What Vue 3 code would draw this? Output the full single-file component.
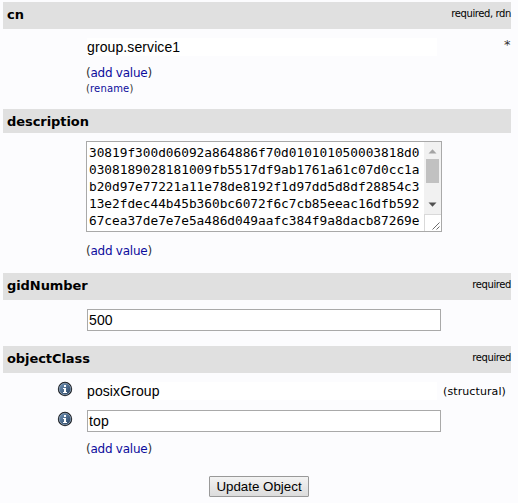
<script setup>
const description = [
  '30819f300d06092a864886f70d010101050003818d0',
  '0308189028181009fb5517df9ab1761a61c07d0cc1a',
  'b20d97e77221a11e78de8192f1d97dd5d8df28854c3',
  '13e2fdec44b45b360bc6072f6c7cb85eeac16dfb592',
  '67cea37de7e7e5a486d049aafc384f9a8dacb87269e',
]
const classes = [
  { name: 'posixGroup', structural: true },
  { name: 'top', structural: false },
]
</script>

<template>
  <main class="form">
    <section class="cn">
      <header class="bar"><b>cn</b><small>required, rdn</small></header>
      <div class="row">
        <div class="field plain"><span>group.service1</span></div>
        <span class="star">*</span>
      </div>
      <div class="add">(<a>add value</a>)</div>
      <div class="rename">(<a>rename</a>)</div>
    </section>

    <section class="desc">
      <header class="bar short"><b>description</b></header>
      <div class="textarea">
        <div class="lines">
          <div v-for="line in description" :key="line">{{ line }}</div>
        </div>
        <div class="side">
          <div class="scroll">
            <svg class="up" width="9" height="5" viewBox="0 0 9 5"><path d="M0.5 4.5 4.5 0.3 8.5 4.5Z" fill="#a3a3a3" /></svg>
            <div class="thumb"></div>
            <svg class="down" width="9" height="5" viewBox="0 0 9 5"><path d="M0.5 0.5 4.5 4.7 8.5 0.5Z" fill="#505050" /></svg>
          </div>
          <div class="corner">
            <svg width="8" height="8" viewBox="0 0 8 8"><path d="M0.5 7.5 7.5 0.5M4.5 7.5 7.5 4.5" stroke="#5a5a5a" stroke-width="0.9" /></svg>
          </div>
        </div>
      </div>
      <div class="add">(<a>add value</a>)</div>
    </section>

    <section class="gid">
      <header class="bar"><b>gidNumber</b><small>required</small></header>
      <div class="row"><div class="field boxed"><span>500</span></div></div>
    </section>

    <section class="oc">
      <header class="bar"><b>objectClass</b><small>required</small></header>
      <div v-for="c in classes" :key="c.name" class="row">
        <svg class="info" width="16" height="16" viewBox="0 0 16 16">
          <defs>
            <linearGradient id="disc" x1="0" y1="0" x2="1" y2="1">
              <stop offset="0" stop-color="#6f93b8" />
              <stop offset="1" stop-color="#27405f" />
            </linearGradient>
          </defs>
          <circle cx="8" cy="8" r="7.2" fill="#1b1f25" />
          <circle cx="8" cy="8" r="5.8" fill="url(#disc)" stroke="#9fb2c6" stroke-width="0.7" />
          <path d="M7 4h2v2H7zM6 7h3v4h1v1H6v-1h1V8H6z" fill="#fff" />
        </svg>
        <div class="field" :class="c.structural ? 'plain' : 'boxed'"><span>{{ c.name }}</span></div>
        <span v-if="c.structural" class="struct">(structural)</span>
      </div>
      <div class="add">(<a>add value</a>)</div>
    </section>

    <button class="submit" type="button">Update Object</button>
  </main>
</template>

<style>
body {
  background: #fcfcfe;
}
</style>

<style scoped>
.form {
  box-sizing: border-box;
  width: 518px;
  height: 503px;
  padding: 2px 7px 0 3px;
  overflow: hidden;
  font-family: "DejaVu Sans", sans-serif;
  font-size: 12px;
  color: #000;
}
.cn { height: 107px; }
.desc { height: 164px; }
.gid { height: 73px; }
.oc { height: 130px; }
.bar {
  box-sizing: border-box;
  width: 508px;
  height: 27px;
  padding: 0 0 0 4px;
  display: flex;
  justify-content: space-between;
  background: #e0e0e0;
}
.bar.short { height: 24px; }
.bar b {
  font-size: 13px;
  line-height: 25px;
  letter-spacing: -0.07px;
}
.bar small {
  font-size: 10px;
  line-height: 23px;
  letter-spacing: -0.4px;
}
.row {
  display: flex;
  padding-left: 84px;
}
.field {
  box-sizing: border-box;
  background: #fff;
  font-family: "Liberation Sans", Arial, sans-serif;
  font-size: 14px;
  letter-spacing: 0.1px;
}
.plain {
  width: 350px;
  height: 18px;
  line-height: 18px;
}
.boxed {
  width: 354px;
  height: 22px;
  border: 1px solid #a9a9a9;
  padding-left: 1px;
  line-height: 20px;
}
.cn .row { margin-top: 9px; }
.star {
  margin-left: 67px;
  font-size: 13px;
  line-height: 14px;
  color: #333;
}
.add {
  padding-left: 83px;
  line-height: 16px;
  letter-spacing: -0.25px;
  color: #333;
}
a {
  color: #0c0c9c;
}
.cn .add { margin-top: 9px; }
.rename {
  padding-left: 83px;
  font-size: 10px;
  line-height: 16px;
  letter-spacing: 0.15px;
  color: #333;
}
.textarea {
  box-sizing: border-box;
  width: 356px;
  height: 91px;
  margin: 8px 0 11px 83px;
  border: 1px solid #a9a9a9;
  background: #fff;
  display: flex;
  justify-content: space-between;
}
.lines {
  padding: 2px 0 0 2px;
  font-family: "DejaVu Sans Mono", monospace;
  font-size: 12.8px;
  letter-spacing: -0.02px;
  line-height: 17px;
}
.side {
  width: 17px;
  display: flex;
  flex-direction: column;
}
.scroll {
  height: 72px;
  background: #f1f1f1;
  display: flex;
  flex-direction: column;
  align-items: center;
}
.up { margin-top: 7px; }
.thumb {
  width: 13px;
  height: 24px;
  margin-top: 5px;
  background: #c1c1c1;
}
.down { margin-top: 19px; }
.corner {
  flex: 1;
  border-top: 1px solid #d9d9d9;
  border-left: 1px solid #d9d9d9;
  display: flex;
  align-items: flex-end;
  justify-content: flex-end;
  padding: 0 1px 1px 0;
}
.gid .row { margin-top: 9px; }
.oc .row {
  padding-left: 54px;
  margin-top: 8px;
}
.oc .row .plain { margin-top: 1px; }
.oc .row .boxed { margin-top: -1px; }
.info {
  margin-right: 14px;
  flex: none;
}
.oc .add { margin-top: 9px; }
.struct {
  margin-left: 6px;
  font-size: 11px;
  line-height: 22px;
  letter-spacing: 0.1px;
}
.submit {
  display: block;
  width: 100px;
  height: 21px;
  margin-left: 206px;
  padding: 0;
  border: 1px solid #999;
  border-radius: 1px;
  background: linear-gradient(#f3f3f3, #dcdcdc);
  font-family: "Liberation Sans", Arial, sans-serif;
  font-size: 13.33px;
  line-height: 19px;
  color: #000;
}
</style>
